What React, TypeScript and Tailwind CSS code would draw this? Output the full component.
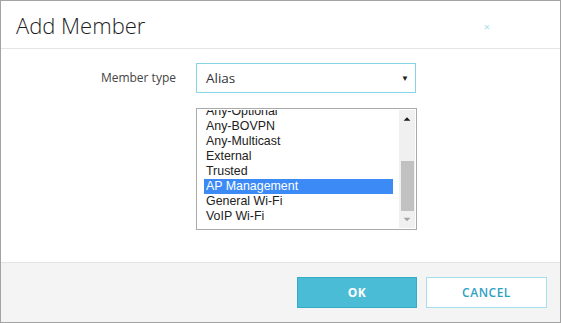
const zones = [
  "Any-Optional",
  "Any-BOVPN",
  "Any-Multicast",
  "External",
  "Trusted",
  "AP Management",
  "General Wi-Fi",
  "VoIP Wi-Fi",
];

export default function App() {
  const selected = "AP Management";

  return (
    <div className="w-[561px] h-[323px] bg-white border border-[#a3a3a3] flex flex-col font-['Open_Sans',sans-serif]">
      {/* header */}
      <div className="h-[48px] flex items-center justify-between pl-[15px] pr-[70px] border-b border-[#e6e6e6]">
        <span className="text-[22px] font-light text-[#1e1e1e] leading-none">Add Member</span>
        <span className="text-[11px] text-[#a9e0ec] leading-none mt-[4px]">×</span>
      </div>

      {/* body */}
      <div className="h-[213px] pt-[14px]">
        <div className="flex items-center gap-[20px]">
          <span className="w-[175px] text-right text-[12px] text-[#444]">Member type</span>
          <div className="w-[220px] h-[30px] border border-[#86d5e6] flex items-center justify-between pl-[9px] pr-[6px]">
            <span className="text-[13.5px] text-[#333]">Alias</span>
            <span className="text-[8px] text-[#222]">▼</span>
          </div>
        </div>

        <div className="ml-[195px] mt-[15px] w-[221px] h-[122px] border border-[#aaaaaa] flex pl-[7px] pr-[1px] py-px">
          <div className="w-[189px] overflow-hidden font-['Liberation_Sans',Arial,sans-serif] text-[12.4px]">
            <div className="-mt-[6px] flex flex-col">
              {zones.map((z) => (
                <div
                  key={z}
                  className={
                    z === selected
                      ? "h-[15px] leading-[15px] pl-[2px] bg-[#3c8af6] text-white"
                      : "h-[15px] leading-[15px] pl-[2px] text-[#222]"
                  }
                >
                  {z}
                </div>
              ))}
            </div>
          </div>
          <div className="ml-auto w-[16px] h-full bg-[#f0f0f0] flex flex-col items-center">
            <svg width="16" height="17" viewBox="0 0 16 17">
              <path d="M4.5 11 L8 7.5 L11.5 11 Z" fill="#1a1a1a" />
            </svg>
            <div className="mt-[34px] w-[13px] h-[52px] bg-[#c1c1c1]" />
            <svg className="mt-auto" width="16" height="17" viewBox="0 0 16 17">
              <path d="M4.5 7 L8 10.5 L11.5 7 Z" fill="#a3a3a3" />
            </svg>
          </div>
        </div>
      </div>

      {/* footer */}
      <div className="flex-1 bg-[#f4f4f4] border-t border-[#e3e3e3] flex justify-end items-start pt-[14px] pr-[13px] gap-[9px]">
        <button className="w-[120px] h-[31px] bg-[#4bbcd6] border border-[#34acc8] text-white text-[12px] font-bold tracking-[0.5px]">
          OK
        </button>
        <button className="w-[121px] h-[31px] bg-white border border-[#a2dfeb] text-[#2fa2c2] text-[12px] font-semibold tracking-[0.5px]">
          CANCEL
        </button>
      </div>
    </div>
  );
}
